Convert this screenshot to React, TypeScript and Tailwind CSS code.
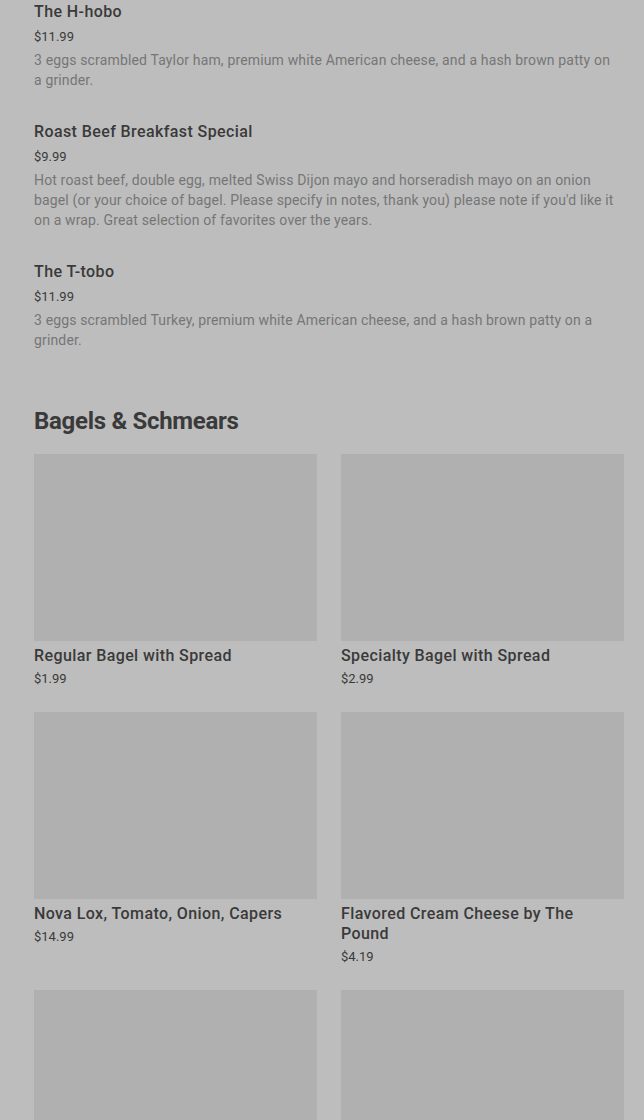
import React from "react";

const items = [
  {
    title: "The H-hobo",
    price: "$11.99",
    desc: "3 eggs scrambled Taylor ham, premium white American cheese, and a hash brown patty on a grinder.",
  },
  {
    title: "Roast Beef Breakfast Special",
    price: "$9.99",
    desc: "Hot roast beef, double egg, melted Swiss Dijon mayo and horseradish mayo on an onion bagel (or your choice of bagel. Please specify in notes, thank you) please note if you'd like it on a wrap. Great selection of favorites over the years.",
  },
  {
    title: "The T-tobo",
    price: "$11.99",
    desc: "3 eggs scrambled Turkey, premium white American cheese, and a hash brown patty on a grinder.",
  },
];

const cards = [
  { title: "Regular Bagel with Spread", price: "$1.99" },
  { title: "Specialty Bagel with Spread", price: "$2.99" },
  { title: "Nova Lox, Tomato, Onion, Capers", price: "$14.99" },
  { title: "Flavored Cream Cheese by The Pound", price: "$4.19" },
  { title: "", price: "" },
  { title: "", price: "" },
];

export default function App() {
  return (
    <div
      className="min-h-[1120px] w-full bg-[#bdbdbd] pl-[34px] pr-[20px] pt-[2px]"
      style={{ fontFamily: "Roboto, 'Noto Sans', sans-serif" }}
    >
      <div className="flex flex-col gap-[32px] pr-[8px]">
        {items.map((it) => (
          <div key={it.title} className="flex flex-col">
            <div className="text-[16px] leading-[20px] font-medium tracking-[0.4px] text-[#3a3a3a]">{it.title}</div>
            <div className="mt-[5px] text-[13px] leading-[20px] text-[#3a3a3a]">{it.price}</div>
            <div className="mt-[3px] text-[14px] leading-[20px] tracking-[0.15px] text-[#767676]">{it.desc}</div>
          </div>
        ))}
      </div>
      <h2 className="mt-[55px] text-[24px] leading-[32px] font-bold tracking-[-0.3px] text-[#3a3a3a]">
        Bagels &amp; Schmears
      </h2>
      <div className="mt-[17px] grid grid-cols-2 gap-x-[24px] gap-y-[23px]">
        {cards.map((c, i) => (
          <div key={i} className="flex flex-col">
            <div className="h-[187px] w-full bg-[#b0b0b0]" />
            {c.title && (
              <>
                <div className="mt-[5px] text-[16px] leading-[20px] font-medium tracking-[0.4px] text-[#3a3a3a]">{c.title}</div>
                <div className="mt-[3px] text-[13px] leading-[20px] text-[#3a3a3a]">{c.price}</div>
              </>
            )}
          </div>
        ))}
      </div>
    </div>
  );
}
